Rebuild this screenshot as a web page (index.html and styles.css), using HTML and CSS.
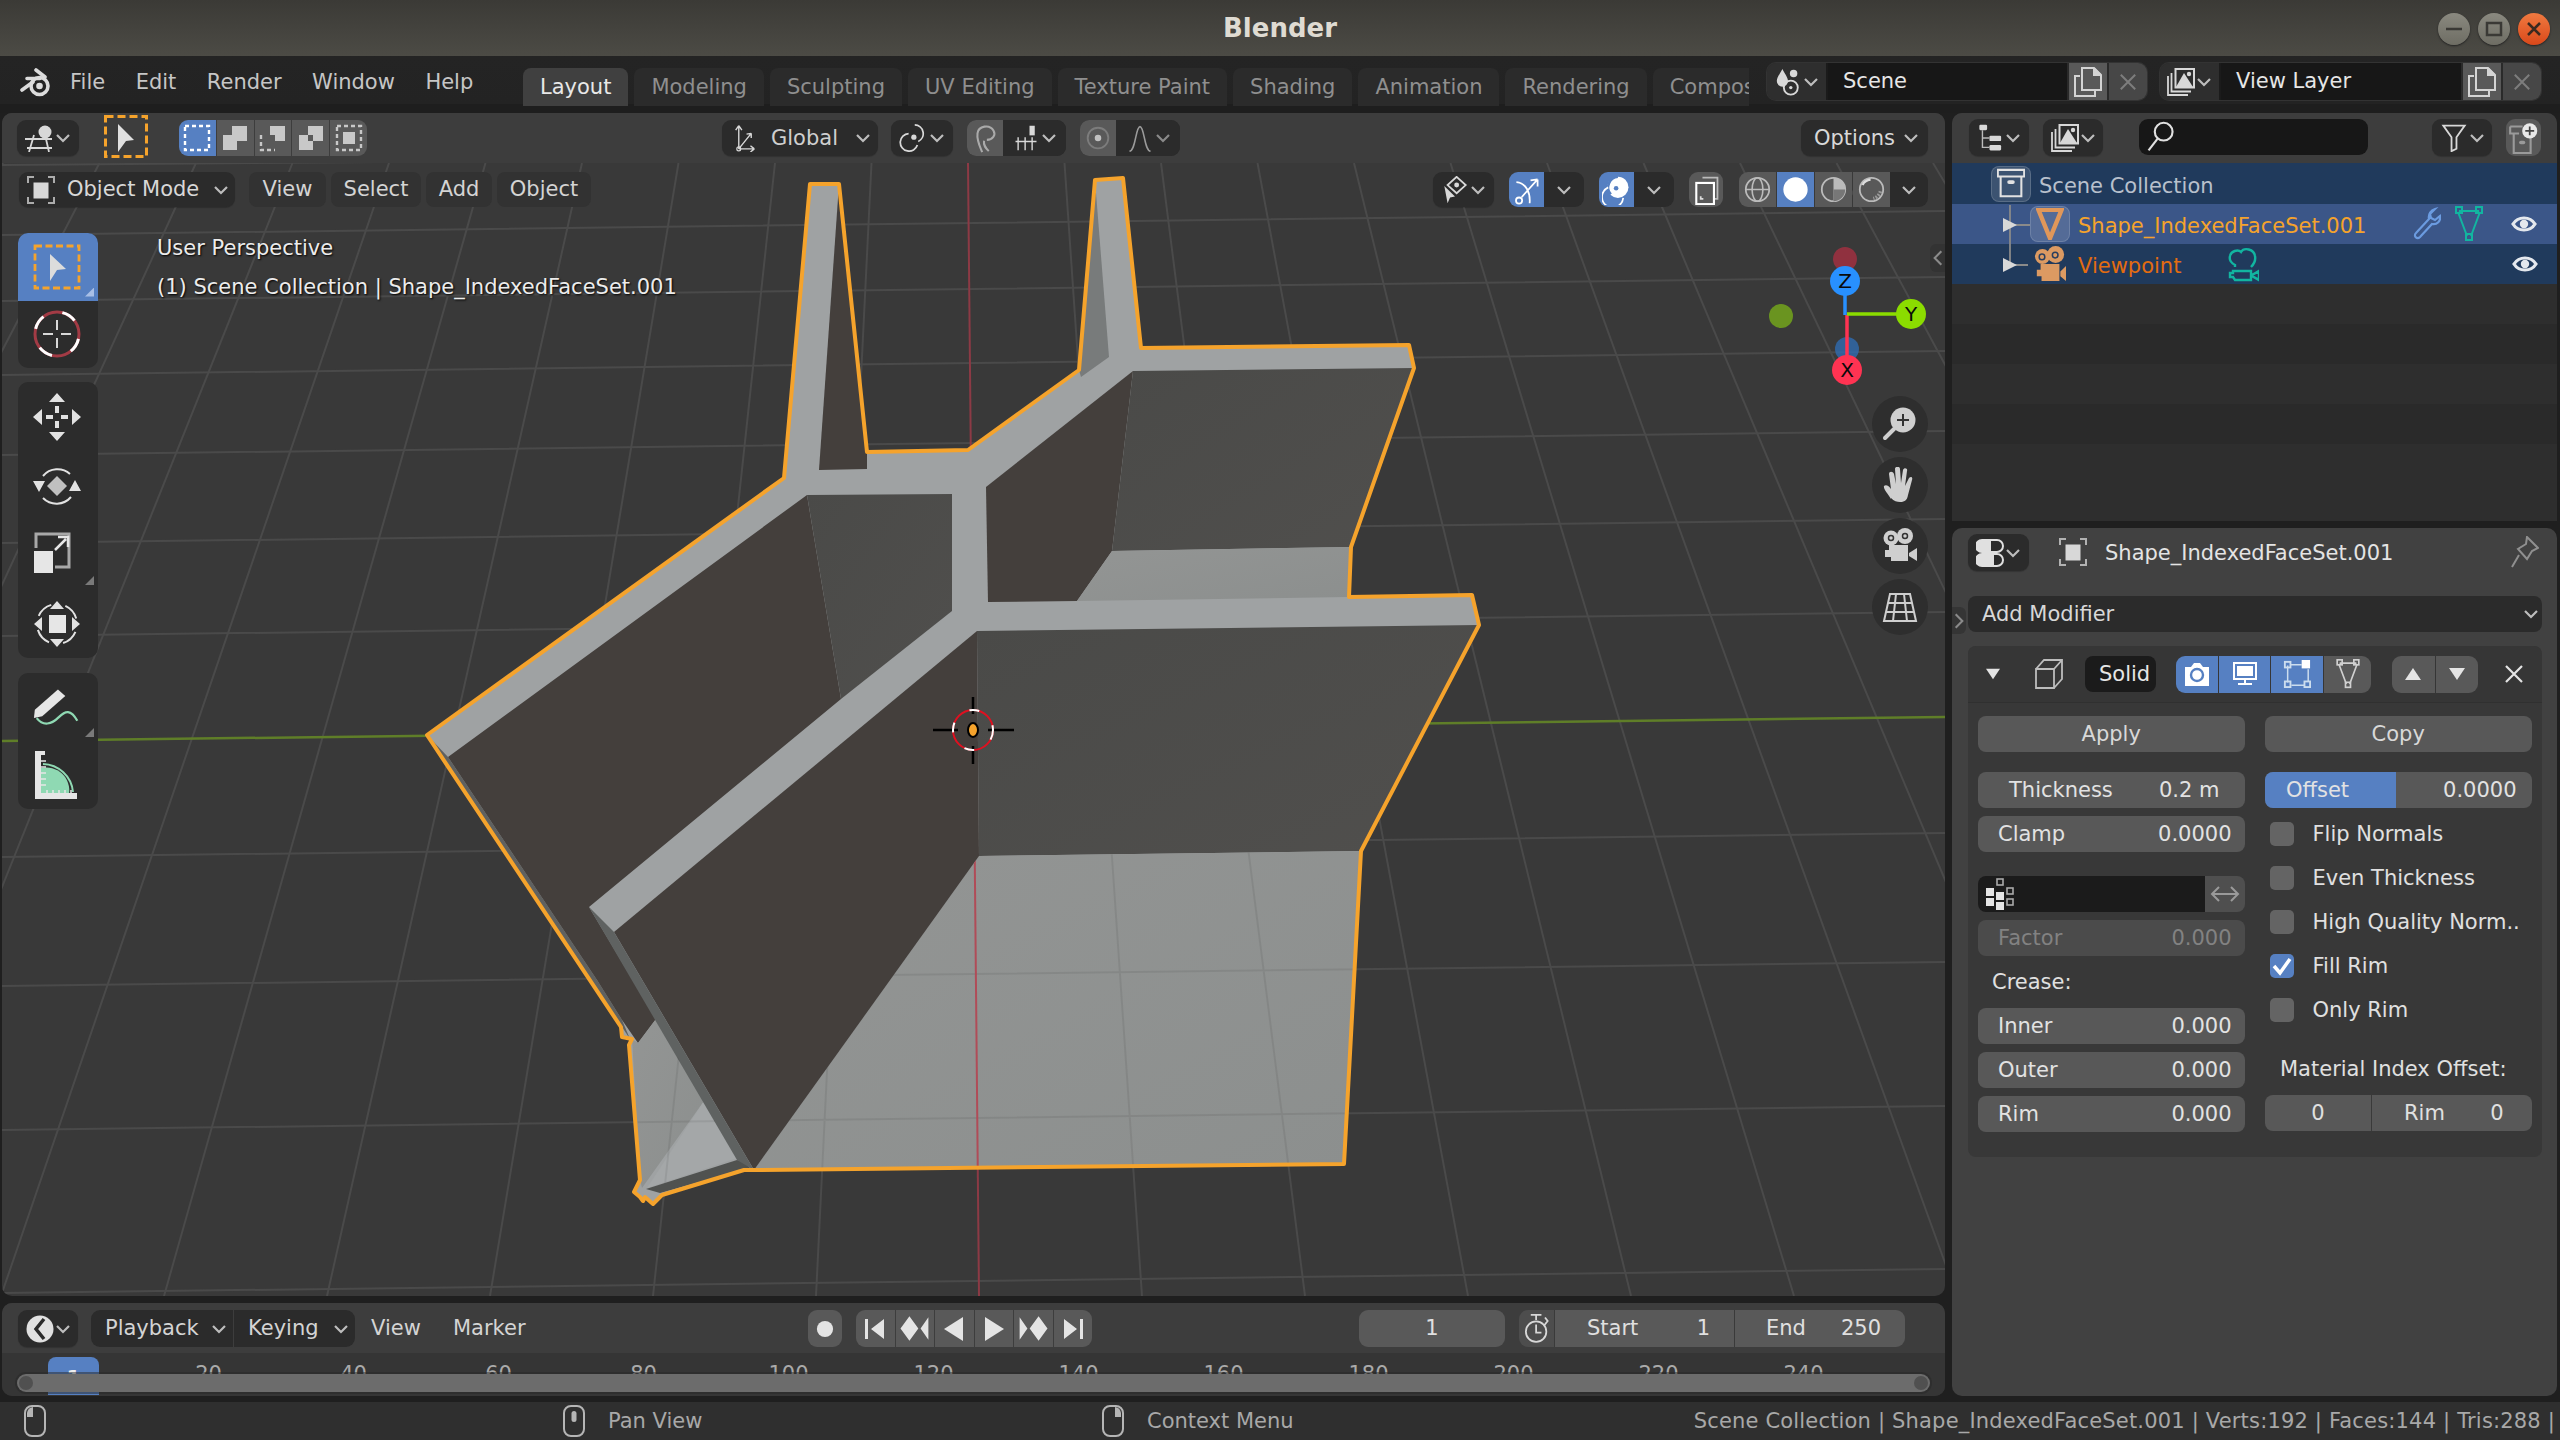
FILE: index.html
```html
<!DOCTYPE html>
<html lang="en">
<head>
<meta charset="utf-8">
<title>Blender</title>
<link rel="stylesheet" href="styles.css">
</head>
<body>
<svg class="sprite" aria-hidden="true"><defs>
<symbol id="chev" viewBox="0 0 16 16"><path d="M2 5l6 6 6-6" fill="none" stroke="currentColor" stroke-width="2.2"/></symbol>
<symbol id="layer" viewBox="0 0 28 28"><path d="M1 8v19h20M4.500 5v18.500h19.500" fill="none" stroke="currentColor" stroke-width="1.800"/><rect x="8.500" y="1" width="18.500" height="18.500" fill="none" stroke="currentColor" stroke-width="2"/><path d="M9 19l8-14 9 14z" fill="currentColor"/><circle cx="22" cy="6" r="2.200" fill="currentColor"/></symbol>
<symbol id="copy" viewBox="0 0 28 30"><path d="M6 9H1v20h20v-5" fill="none" stroke="currentColor" stroke-width="2"/><path d="M8 1h12l7 7v15H8z" fill="none" stroke="currentColor" stroke-width="2"/><path d="M19 1h2l6 6v2h-8z" fill="currentColor"/></symbol>
<symbol id="cross" viewBox="0 0 20 20"><path d="M2 2l16 16M18 2L2 18" fill="none" stroke="currentColor" stroke-width="2.200"/></symbol>
<symbol id="objbox" viewBox="0 0 28 28"><path d="M1 7V1h6M21 1h6v6M27 21v6h-6M7 27H1v-6" fill="none" stroke="currentColor" stroke-width="2" opacity=".75"/><rect x="6.500" y="6.500" width="15" height="16" fill="currentColor"/></symbol>
<symbol id="eye" viewBox="0 0 26 22"><path d="M2 11C7 3 19 3 24 11C19 19 7 19 2 11z" fill="none" stroke="currentColor" stroke-width="3.200"/><circle cx="13" cy="11" r="4.200" fill="currentColor"/></symbol>
<symbol id="cage" viewBox="0 0 28 36"><path d="M4 5h20M3 6l9 24M25 6l-9 24" fill="none" stroke="currentColor" stroke-width="2"/><rect x="1" y="1" width="6" height="6" fill="none" stroke="currentColor" stroke-width="2"/><rect x="21" y="1" width="6" height="6" fill="none" stroke="currentColor" stroke-width="2"/><rect x="11" y="28" width="6" height="6" fill="none" stroke="currentColor" stroke-width="2"/></symbol>
<symbol id="movie" viewBox="0 0 32 36"><path d="M8 21v-2c-4-2-6-5-5-9 1-5 8-7 11-4 3-5 13-3 14 4 1 5-1 8-4 11" fill="none" stroke="currentColor" stroke-width="2.400"/><path d="M6 25h18v9H8l-2-3H3v-4h3zM25 29l7-4v9l-7-4z" fill="none" stroke="currentColor" stroke-width="2.400"/></symbol>
<symbol id="camsolid" viewBox="0 0 34 38"><circle cx="9" cy="11" r="8" fill="currentColor"/><circle cx="23" cy="9" r="9" fill="currentColor"/><circle cx="8.500" cy="11.500" r="3" fill="none" stroke="#2a3f5f" stroke-width="1.600"/><circle cx="22.500" cy="9.500" r="3" fill="none" stroke="#2a3f5f" stroke-width="1.600"/><path d="M7 19h20v18H8v-5H3v-7h4zM28 27l6-6v16l-6-5z" fill="currentColor"/></symbol>
<symbol id="mouse" viewBox="0 0 22 32"><rect x="1" y="1" width="20" height="30" rx="7" fill="none" stroke="currentColor" stroke-width="2"/></symbol>
<symbol id="tri" viewBox="0 0 16 16"><path d="M8 14L0 2h16z" fill="currentColor"/></symbol>
</defs></svg>

<div class="titlebar">
  <span class="title">Blender</span>
  <div class="winbtns">
    <span class="winbtn"><svg viewBox="0 0 32 32"><path d="M8 16h16" stroke="#3a3935" stroke-width="2.500"/></svg></span>
    <span class="winbtn"><svg viewBox="0 0 32 32"><rect x="9" y="10" width="14" height="12" fill="none" stroke="#3a3935" stroke-width="2.500"/></svg></span>
    <span class="winbtn close"><svg viewBox="0 0 32 32"><path d="M10 10l12 12M22 10L10 22" stroke="#3a2a20" stroke-width="2.500"/></svg></span>
  </div>
</div>

<div class="topbar">
  <svg class="logo" viewBox="0 0 32 30"><circle cx="19.500" cy="18" r="8.500" fill="none" stroke="#dcdcdc" stroke-width="3.600"/><circle cx="19.500" cy="18" r="3.300" fill="#dcdcdc"/><path d="M2 22l11-8M7 10.500h13M16 2l9 7" fill="none" stroke="#dcdcdc" stroke-width="3.600" stroke-linecap="round"/></svg>
  <nav class="menu">
    <span class="menu-item">File</span><span class="menu-item">Edit</span><span class="menu-item">Render</span><span class="menu-item">Window</span><span class="menu-item">Help</span>
  </nav>
  <div class="tabs">
    <span class="tab active">Layout</span><span class="tab">Modeling</span><span class="tab">Sculpting</span><span class="tab">UV Editing</span><span class="tab">Texture Paint</span><span class="tab">Shading</span><span class="tab">Animation</span><span class="tab">Rendering</span><span class="tab">Compositing</span>
  </div>
  <div class="idgroup scene-group">
    <span class="iddrop"><svg class="ic28" viewBox="0 0 28 30"><path d="M8 1c3 6 6 9 6 13a6 6 0 0 1-12 0c0-4 3-7 6-13z" fill="#d8d8d8"/><circle cx="20" cy="6" r="4" fill="#d8d8d8"/><circle cx="17" cy="21" r="7.500" fill="none" stroke="#d8d8d8" stroke-width="2"/><circle cx="17" cy="21" r="1.800" fill="#d8d8d8"/></svg><svg class="chev"><use href="#chev"/></svg></span>
    <span class="idinput scene-input">Scene</span>
    <span class="idbtn"><svg class="ic-copy"><use href="#copy"/></svg></span>
    <span class="idbtn dim"><svg class="ic-x"><use href="#cross"/></svg></span>
  </div>
  <div class="idgroup layer-group">
    <span class="iddrop"><svg class="ic28"><use href="#layer"/></svg><svg class="chev"><use href="#chev"/></svg></span>
    <span class="idinput layer-input">View Layer</span>
    <span class="idbtn"><svg class="ic-copy"><use href="#copy"/></svg></span>
    <span class="idbtn dim"><svg class="ic-x"><use href="#cross"/></svg></span>
  </div>
</div>

<main class="workspace">
  <div class="leftcol">
    <section class="viewport">
      <svg class="scene" viewBox="2 113 1943 1183" preserveAspectRatio="none">
        <defs>
          <clipPath id="floorclip"><path d="M979 856L1361 851 1344 1164 754 1170zM632 1039L656 1019 737 1160 642 1190z"/></clipPath>
          <linearGradient id="wallr" x1="0" y1="0" x2="1" y2="1"><stop offset="0" stop-color="#4a4a48"/><stop offset="1" stop-color="#504f4d"/></linearGradient>
          <linearGradient id="floorg" x1="0" y1="0" x2="1" y2="1"><stop offset="0" stop-color="#939594"/><stop offset="1" stop-color="#8c8f8e"/></linearGradient>
        </defs>
        <g class="grid">
          <path d="M2 165L1945 150M2 235L1945 211M2 301L1945 277M2 375L1945 351M2 455L1945 431M2 543L1945 519M2 636L1945 612M2 857L1945 833M2 986L1945 962M2 1130L1945 1106M2 1293L1945 1269"/>
          <path d="M3 163L-651 1296M99.500 163L-488 1296M196 163L-325 1296M292.500 163L-162 1296M389 163L1 1296M485.500 163L164 1296M582 163L327 1296M678.500 163L490 1296M775 163L653 1296M871.500 163L816 1296M1064.500 163L1142 1296M1161 163L1305 1296M1257.500 163L1468 1296M1354 163L1631 1296M1450.500 163L1794 1296M1547 163L1957 1296M1643.500 163L2120 1296M1740 163L2283 1296M1836.500 163L2446 1296M1933 163L2609 1296"/>
        </g>
        <path class="axis-y" d="M2 741L1945 717"/>
        <path class="axis-x" d="M968 163L979 1296"/>
        <path class="top" d="M427 735L784 478 810 184 839 184 867 452 968 450 1079 370 1095 180 1123 178 1141 348 1409 345 1414 368 1351 547 1349 597 1472 595 1479 625 1361 851 1344 1164 754 1170 744 1170 662 1195 653 1204 645 1197 643 1201 640 1197 634 1192 640 1180 629 1045 632 1039 622 1037 621 1027z"/>
        <path class="dark" d="M839 184L867 452 867 469 819 470z"/>
        <path class="spike" d="M1095 180L1109 357 1081 377 1079 370z"/>
        <path class="sliver" d="M428 736L448 757 597 980 622 1020 630 1039 622 1027z"/>
        <path class="dark" d="M448 757L807 495 841 699 589 907 656 1019 638 1043 622 1020 597 980z"/>
        <path class="wall" d="M807 495L952 494 952 611 841 699z"/>
        <path class="dark" d="M986 487L1133 371 1112 551 1077 601 988 602z"/>
        <path class="wall" d="M1133 371L1414 368 1351 547 1112 551z"/>
        <path class="floor" d="M1112 551L1351 547 1349 597 1077 601z"/>
        <path class="wall" d="M977 631L1479 625 1361 851 979 856z"/>
        <path class="floor" d="M979 856L1361 851 1344 1164 754 1170z"/>
        <path class="dark" d="M977 631L979 856 754 1170 614 932z"/>
        <path class="floor" d="M632 1039L638 1043 656 1019 704 1101 642 1188 640 1180z"/>
        <path class="top-lite" d="M704 1101L737 1158 647 1188z"/>
        <path class="band" d="M737 1160L745 1162 750 1168 660 1193 646 1189z"/>
        <path class="band2" d="M589 907L614 932 754 1170 737 1160z"/>
        <g clip-path="url(#floorclip)"><path class="floorgrid" d="M2 986L1945 962M2 1130L1945 1106M1064.500 163L1142 1296M1161 163L1305 1296M1257.500 163L1468 1296M775 163L653 1296M871.500 163L816 1296M582 163L327 1296"/><path class="axis-x2" d="M968 163L979 1296"/></g>
        <path class="outline" d="M427 735L784 478 810 184 839 184 867 452 968 450 1079 370 1095 180 1123 178 1141 348 1409 345 1414 368 1351 547 1349 597 1472 595 1479 625 1361 851 1344 1164 754 1170 744 1170 662 1195 653 1204 645 1197 643 1201 640 1197 634 1192 640 1180 629 1045 632 1039 622 1037 621 1027z"/>
        <g class="cursor3d">
          <path class="chair" d="M933 730H958M988 730H1014M973 697V714M973 746V764"/>
          <ellipse class="ring-r" cx="973" cy="730" rx="20" ry="20"/>
          <ellipse class="ring-w" cx="973" cy="730" rx="20" ry="20"/>
          <ellipse class="dot" cx="973" cy="730" rx="5" ry="7"/>
        </g>
      </svg>

      <div class="vhead">
        <span class="dd dd-editor"><svg class="ic28" viewBox="0 0 28 28"><circle cx="20" cy="8" r="6.500" fill="#d8d8d8"/><path d="M0 15h27M2 24h25M9 11L4 28M21 15l3 13" fill="none" stroke="#d8d8d8" stroke-width="1.800"/></svg><svg class="chev"><use href="#chev"/></svg></span>
        <span class="activetool"><svg viewBox="0 0 44 43"><rect x="1.500" y="1.500" width="41" height="40" fill="none" stroke="#f5a32c" stroke-width="3" stroke-dasharray="8 4"/><path d="M14 9l16 16-8 1-8 11z" fill="#e0e0e0"/></svg></span>
        <span class="seg selmodes">
          <span class="segb on"><svg viewBox="0 0 30 30"><rect x="3" y="3" width="24" height="24" fill="none" stroke="#fff" stroke-width="2.400" stroke-dasharray="4 3"/></svg></span>
          <span class="segb"><svg viewBox="0 0 30 30"><path d="M3 12h9V3h15v15H17v9H3z" fill="#c8c8c8"/></svg></span>
          <span class="segb"><svg viewBox="0 0 30 30"><path d="M12 3h15v15H17v-6h-5z" fill="#c8c8c8"/><path d="M3 12v15h14" fill="none" stroke="#c8c8c8" stroke-width="2.400" stroke-dasharray="4 3"/></svg></span>
          <span class="segb"><svg viewBox="0 0 30 30"><path fill-rule="evenodd" d="M3 12h9V3h15v15H17v9H3zM12 12v6h5v-6z" fill="#c8c8c8"/></svg></span>
          <span class="segb"><svg viewBox="0 0 30 30"><rect x="3" y="3" width="24" height="24" fill="none" stroke="#c8c8c8" stroke-width="2.400" stroke-dasharray="4 3"/><rect x="9" y="9" width="12" height="12" fill="#c8c8c8"/></svg></span>
        </span>
        <span class="dd dd-global"><svg class="ic28" viewBox="0 0 28 36"><path d="M6 32V2M6 2L2 8M6 2l4 6M6 32h20M26 32l-5-4M26 32l-5 4M6 32L22 12M22 12l-6 1M22 12v6" fill="none" stroke="#d8d8d8" stroke-width="1.800"/><circle cx="6" cy="32" r="2.500" fill="none" stroke="#d8d8d8" stroke-width="1.500"/></svg><span class="dd-txt">Global</span><svg class="chev"><use href="#chev"/></svg></span>
        <span class="dd dd-pivot"><svg class="ic28" viewBox="0 0 28 32"><path d="M16 1a10 10 0 0 1 4 19M9 11A10 10 0 1 0 19 24" fill="none" stroke="#d8d8d8" stroke-width="2"/><circle cx="15" cy="15" r="3" fill="#d8d8d8"/></svg><svg class="chev"><use href="#chev"/></svg></span>
        <span class="seg snap"><span class="segb toggle"><svg viewBox="0 0 30 32"><path d="M12 31C9 24 6 18 7 11 8 3 20 1 24 8c3 5-1 10-7 10M19 30c-3-3-6-6-5-11" fill="none" stroke="#aaa" stroke-width="2.200"/></svg></span><span class="segdrop"><svg class="ic28" viewBox="0 0 28 32"><rect x="18" y="2" width="6" height="11" fill="#d8d8d8"/><path d="M2 20h24M5 15v15M13 15v15M21 15v15" fill="none" stroke="#d8d8d8" stroke-width="1.600"/></svg><svg class="chev"><use href="#chev"/></svg></span></span>
        <span class="seg prop"><span class="segb toggle"><svg viewBox="0 0 30 32"><circle cx="15" cy="16" r="11" fill="none" stroke="#7c7c7c" stroke-width="2"/><circle cx="15" cy="16" r="3.500" fill="#c0c0c0"/></svg></span><span class="segdrop"><svg class="ic28" viewBox="0 0 28 32"><path d="M2 31c7 0 7-28 12-28s5 28 12 28" fill="none" stroke="#9a9a9a" stroke-width="1.800"/></svg><svg class="chev dimc"><use href="#chev"/></svg></span></span>
        <span class="dd dd-options"><span class="dd-txt">Options</span><svg class="chev"><use href="#chev"/></svg></span>
      </div>

      <div class="vhead2">
        <span class="dd dd-mode"><svg class="ic28"><use href="#objbox"/></svg><span class="dd-txt">Object Mode</span><svg class="chev"><use href="#chev"/></svg></span>
        <span class="vmenu vm-view">View</span><span class="vmenu vm-select">Select</span><span class="vmenu vm-add">Add</span><span class="vmenu vm-object">Object</span>
        <span class="dd dd-vis"><svg class="ic28" viewBox="0 0 28 34"><path d="M16 1l11 10-11 10L5 11z" fill="none" stroke="#d8d8d8" stroke-width="2.200"/><circle cx="16" cy="11" r="3" fill="#d8d8d8"/><path d="M1 12l13 13-6 1-3 7z" fill="#d8d8d8"/></svg><svg class="chev"><use href="#chev"/></svg></span>
        <span class="seg gizmo"><span class="segb on"><svg viewBox="0 0 30 34"><path d="M3 8C14 9 19 20 18 32M9 25L27 5M27 5l-8 1M27 5v8" fill="none" stroke="#fff" stroke-width="2"/><circle cx="6" cy="29" r="3.500" fill="none" stroke="#fff" stroke-width="2"/></svg></span><span class="segdrop"><svg class="chev"><use href="#chev"/></svg></span></span>
        <span class="seg overlay"><span class="segb on"><svg viewBox="0 0 30 34"><circle cx="16" cy="14" r="12" fill="#fff"/><path d="M16 2a12 12 0 0 0-8 20" fill="none" stroke="#5680c2" stroke-width="3"/><circle cx="14" cy="15" r="2.600" fill="#5680c2"/><path d="M22 26A12 12 0 1 1 5 14" fill="none" stroke="#fff" stroke-width="2"/></svg></span><span class="segdrop"><svg class="chev"><use href="#chev"/></svg></span></span>
        <span class="seg xray"><span class="segb plain"><svg viewBox="0 0 30 34"><path d="M11 3h17v24h-4" fill="none" stroke="#bbb" stroke-width="2"/><rect x="4" y="9" width="20" height="24" fill="none" stroke="#fff" stroke-width="2.400"/><path d="M9 24v3h3" fill="none" stroke="#ddd" stroke-width="2"/></svg></span></span>
        <span class="seg shading">
          <span class="segb plain"><svg viewBox="0 0 30 30"><circle cx="15" cy="15" r="13" fill="none" stroke="#bbb" stroke-width="2"/><ellipse cx="15" cy="15" rx="6" ry="13" fill="none" stroke="#bbb" stroke-width="1.800"/><path d="M2 15h26" stroke="#bbb" stroke-width="1.800"/></svg></span>
          <span class="segb on"><svg viewBox="0 0 30 30"><circle cx="15" cy="15" r="13.500" fill="#fff"/></svg></span>
          <span class="segb plain"><svg viewBox="0 0 30 30"><circle cx="15" cy="15" r="13" fill="none" stroke="#bbb" stroke-width="2"/><path d="M15 2a13 13 0 0 1 0 26z" fill="#bbb"/><path d="M15 15h13a13 13 0 0 1-13 13z" fill="#777"/></svg></span>
          <span class="segb plain"><svg viewBox="0 0 30 30"><circle cx="15" cy="15" r="13" fill="none" stroke="#bbb" stroke-width="2"/><path d="M5 10a11 11 0 0 1 9-6" fill="none" stroke="#ddd" stroke-width="2.500"/><path d="M25 17a11 11 0 0 1-8 8" fill="none" stroke="#999" stroke-width="4" stroke-dasharray="2 1.500"/></svg></span>
          <span class="segdrop"><svg class="chev"><use href="#chev"/></svg></span>
        </span>
      </div>

      <div class="vinfo">
        <p>User Perspective</p>
        <p>(1) Scene Collection | Shape_IndexedFaceSet.001</p>
      </div>

      <div class="tools">
        <div class="toolgroup g1">
          <span class="tool on"><svg viewBox="0 0 48 48"><rect x="2" y="3" width="44" height="42" fill="none" stroke="#f5a32c" stroke-width="2.800" stroke-dasharray="7 3.500"/><path d="M17 11l16 15-9 1-7 11z" fill="#dcdcdc"/></svg><i class="corner"></i></span>
          <span class="tool"><svg viewBox="0 0 48 48"><circle cx="24" cy="24" r="22" fill="none" stroke="#a33b45" stroke-width="3"/><circle cx="24" cy="24" r="22" fill="none" stroke="#fff" stroke-width="3" stroke-dasharray="14.500 20" stroke-dashoffset="-5"/><path d="M24 10v10M24 28v10M10 24h10M28 24h10" stroke="#d8d8d8" stroke-width="2"/></svg></span>
        </div>
        <div class="toolgroup g2">
          <span class="tool"><svg viewBox="0 0 48 48"><path d="M24 0l8 9H16zM24 48l-8-9h16zM0 24l9-8v16zM48 24l-9 8V16z" fill="#e2e2e2"/><path d="M22 13h4v7h-4zM22 28h4v7h-4zM13 22h7v4h-7zM28 22h7v4h-7z" fill="#e2e2e2"/></svg></span>
          <span class="tool"><svg viewBox="0 0 48 48"><path d="M10 14A19 19 0 0 1 37 12M38 35A19 19 0 0 1 10 36" fill="none" stroke="#e2e2e2" stroke-width="2"/><path d="M24 14l10 10-10 10-10-10z" fill="#c0c0c0"/><path d="M0 19h12L6 30zM36 29h12l-6-11z" fill="#e2e2e2"/></svg></span>
          <span class="tool"><svg viewBox="0 0 48 48"><path d="M3 17V3h33v33H22" fill="none" stroke="#a8a8a8" stroke-width="3"/><rect x="1" y="20" width="19" height="22" fill="#e6e6e6"/><path d="M22 19L33 8M25 6h10v10" fill="none" stroke="#e6e6e6" stroke-width="2.500"/></svg><i class="corner"></i></span>
          <span class="tool"><svg viewBox="0 0 48 48"><rect x="16" y="15" width="17" height="18" fill="#e6e6e6"/><path d="M24 1l7 8H17zM24 47l-7-8h14zM1 24l8-7v14zM47 24l-8 7V17z" fill="#e2e2e2"/><circle cx="24" cy="24" r="20" fill="none" stroke="#e2e2e2" stroke-width="2" stroke-dasharray="17 14.400" stroke-dashoffset="-8"/></svg></span>
        </div>
        <div class="toolgroup g3">
          <span class="tool"><svg viewBox="0 0 52 48"><path d="M2 27L27 5l8 7L10 34 1 36z" fill="#e6e6e6"/><path d="M4 36c7 9 16 7 24-1 7-7 13-9 20 4" fill="none" stroke="#8fd9b3" stroke-width="2.400"/></svg><i class="corner"></i></span>
          <span class="tool"><svg viewBox="0 0 48 48"><path d="M8 17a23 23 0 0 1 28 26H8z" fill="#8fd9b3"/><path d="M10 13a31 31 0 0 1 30 28" fill="none" stroke="#8fd9b3" stroke-width="2"/><path d="M2 0h10v4H8v38h36v6H2z" fill="#e6e6e6"/><path d="M8 10h5M8 16h5M8 22h5M8 28h5M8 34h5M14 42v-3M20 42v-3M26 42v-3M32 42v-3M38 42v-3" stroke="#e6e6e6" stroke-width="1.500"/></svg></span>
        </div>
      </div>

      <svg class="gizmo3d" viewBox="0 0 130 130">
        <circle cx="56" cy="27" r="12" fill="#9a3140" opacity=".9"/>
        <circle cx="58" cy="117" r="12" fill="#2f6cb0" opacity=".8"/>
        <circle cx="-8" cy="84" r="12" fill="#6a9420"/>
        <path d="M56 49V83" stroke="#2890ff" stroke-width="3.500"/>
        <path d="M58 83V125" stroke="#ff3352" stroke-width="3.500"/>
        <path d="M58 82H108" stroke="#8bdc00" stroke-width="3.500"/>
        <circle cx="56" cy="49" r="15" fill="#2890ff"/>
        <circle cx="122" cy="82" r="15" fill="#8bdc00"/>
        <circle cx="58" cy="138" r="15" fill="#ff3352"/>
        <text x="56" y="56" class="gz">Z</text>
        <text x="122" y="89" class="gz">Y</text>
        <text x="58" y="145" class="gz">X</text>
      </svg>

      <div class="navbtns">
        <span class="navbtn"><svg viewBox="0 0 36 36"><circle cx="21" cy="14" r="12.500" fill="#cfcfcf"/><path d="M21 8v12M15 14h12" stroke="#333" stroke-width="2"/><path d="M12 23L3 32" stroke="#cfcfcf" stroke-width="4" stroke-linecap="round"/></svg></span>
        <span class="navbtn"><svg viewBox="0 0 36 36"><path d="M9 32C6 27 1 22 2 19c2-2 5 0 7 3L7 7c0-3 4-3 5 0l2 10-1-15c0-3 5-3 5 0l1 14 2-13c1-3 5-2 4 1l-2 15 4-8c2-2 4-1 3 2l-4 15c-1 6-4 7-8 7-3 0-6-1-9-4z" fill="#cfcfcf"/></svg></span>
        <span class="navbtn"><svg viewBox="0 0 36 36"><circle cx="9" cy="10" r="7.500" fill="#cfcfcf"/><circle cx="23" cy="8" r="8" fill="#cfcfcf"/><circle cx="9" cy="10" r="2.500" fill="none" stroke="#333" stroke-width="1.500"/><circle cx="23" cy="8" r="2.500" fill="none" stroke="#333" stroke-width="1.500"/><path d="M7 17h19v16H9v-4H3v-7h4zM27 25l8-5v13l-8-5z" fill="#cfcfcf"/></svg></span>
        <span class="navbtn"><svg viewBox="0 0 36 36"><path d="M8 5h20l6 27H2zM6 14h24M4 23h28M14 5l-3 27M22 5l3 27" fill="none" stroke="#cfcfcf" stroke-width="2"/></svg></span>
      </div>
      <span class="sidearrow"><svg viewBox="0 0 12 20"><path d="M10 2L2 10l8 8" fill="none" stroke="#8a8a8a" stroke-width="2.500"/></svg></span>
    </section>

    <section class="timeline">
      <div class="thead">
        <span class="dd dd-time"><svg class="ic28" viewBox="0 0 28 28"><circle cx="14" cy="14" r="13.500" fill="#e0e0e0"/><path d="M18 4l-8 10 8 10" fill="none" stroke="#2a2a2a" stroke-width="3.500"/></svg><svg class="chev"><use href="#chev"/></svg></span>
        <span class="ddgroup">
          <span class="ddpart dp-play"><span class="dd-txt">Playback</span><svg class="chev"><use href="#chev"/></svg></span>
          <span class="ddpart dp-key"><span class="dd-txt">Keying</span><svg class="chev"><use href="#chev"/></svg></span>
        </span>
        <span class="tmenu tm-view">View</span><span class="tmenu tm-marker">Marker</span>
        <span class="btn record"><svg viewBox="0 0 20 20"><circle cx="10" cy="10" r="9" fill="#e4e4e4"/></svg></span>
        <span class="seg transport">
          <span class="tbtn"><svg viewBox="0 0 26 26"><path d="M3 3h3v20H3zM22 3v20L9 13z" fill="#e4e4e4"/></svg></span>
          <span class="tbtn"><svg class="wide" viewBox="0 0 30 26"><path d="M10 2l8 11-8 11-8-11zM27 3v20l-7-10z" fill="#e4e4e4"/></svg></span>
          <span class="tbtn"><svg viewBox="0 0 26 26"><path d="M22 1v24L3 13z" fill="#e4e4e4"/></svg></span>
          <span class="tbtn"><svg viewBox="0 0 26 26"><path d="M4 1v24l19-12z" fill="#e4e4e4"/></svg></span>
          <span class="tbtn"><svg class="wide" viewBox="0 0 30 26"><path d="M20 2l-8 11 8 11 8-11zM3 3v20l7-10z" fill="#e4e4e4"/></svg></span>
          <span class="tbtn"><svg viewBox="0 0 26 26"><path d="M23 3h-3v20h3zM4 3v20l13-10z" fill="#e4e4e4"/></svg></span>
        </span>
        <span class="btn frame">1</span>
        <span class="seg range">
          <span class="rng-icon"><svg viewBox="0 0 28 36"><circle cx="13" cy="21" r="11.500" fill="none" stroke="#d8d8d8" stroke-width="2"/><path d="M13 13v9h6M7 2h12M13 2v6M23 5l3 4-4 5" fill="none" stroke="#d8d8d8" stroke-width="2"/></svg></span>
          <span class="rng rng-start"><span>Start</span><span>1</span></span>
          <span class="rng rng-end"><span>End</span><span>250</span></span>
        </span>
      </div>
      <div class="scrub">
        <div class="ticks"><span>20</span><span>40</span><span>60</span><span>80</span><span>100</span><span>120</span><span>140</span><span>160</span><span>180</span><span>200</span><span>220</span><span>240</span></div>
        <span class="frametag">1</span>
        <div class="scrollbar"><i></i><i></i></div>
      </div>
    </section>
  </div>

  <div class="rightcol">
    <section class="outliner">
      <div class="ohead">
        <span class="dd dd-o1"><svg class="ic28" viewBox="0 0 30 36"><rect x="0" y="1" width="10" height="7" rx="1.500" fill="#d8d8d8"/><rect x="13" y="15" width="15" height="7" rx="1.500" fill="#d8d8d8"/><rect x="13" y="27" width="15" height="7" rx="1.500" fill="#d8d8d8"/><path d="M4 8v22h9M4 18h9" fill="none" stroke="#bbb" stroke-width="1.800"/></svg><svg class="chev"><use href="#chev"/></svg></span>
        <span class="dd dd-o2"><svg class="ic28"><use href="#layer"/></svg><svg class="chev"><use href="#chev"/></svg></span>
        <span class="search"><svg viewBox="0 0 30 36"><circle cx="18" cy="12" r="10" fill="none" stroke="#e0e0e0" stroke-width="2.400"/><path d="M11 20L1 33" stroke="#e0e0e0" stroke-width="2.400"/></svg></span>
        <span class="dd dd-o3"><svg class="ic28" viewBox="0 0 30 34"><path d="M2 2h26L18 16v14l-6 3V16z" fill="none" stroke="#d8d8d8" stroke-width="2.200"/></svg><svg class="chev"><use href="#chev"/></svg></span>
        <span class="onew"><svg viewBox="0 0 32 36"><path d="M1 5h14M1 5v8h10M5 13v22h19V16" fill="none" stroke="#9a9a9a" stroke-width="2.400"/><rect x="11" y="21" width="7" height="4" rx="2" fill="#9a9a9a"/><circle cx="23" cy="10" r="8.500" fill="#e8e8e8"/><path d="M23 5v10M18 10h10" stroke="#444" stroke-width="2"/></svg></span>
      </div>
      <div class="orows">
        <div class="orow sel r1"><span class="obox"><svg viewBox="0 0 28 34"><path d="M0 2h28v7H0zM3 9v21h22V9" fill="none" stroke="#e2e2e2" stroke-width="2.200"/><rect x="10" y="13" width="8" height="4" rx="2" fill="#e2e2e2"/></svg></span><span class="olabel">Scene Collection</span></div>
        <div class="orow active r2"><span class="obox"><svg viewBox="0 0 30 36"><path d="M2 2h26L15 34z" fill="none" stroke="#e0975a" stroke-width="5"/></svg></span><span class="olabel objname">Shape_IndexedFaceSet.001</span><svg class="ic-wrench" viewBox="0 0 28 34"><path d="M22 2l-5 5 1 4 4 2 5-4c1 5-3 9-8 8L7 30c-3 3-7-1-4-4L16 12c-1-5 2-9 6-10z" fill="none" stroke="#6b9be0" stroke-width="2.200"/></svg><svg class="ic-cage"><use href="#cage"/></svg><svg class="ic-eye"><use href="#eye"/></svg></div>
        <div class="orow sel r3"><span class="obox plainbox"><svg class="ic-cam"><use href="#camsolid"/></svg></span><span class="olabel objname2">Viewpoint</span><svg class="ic-movie"><use href="#movie"/></svg><svg class="ic-eye"><use href="#eye"/></svg></div>
        <div class="orow alt"></div><div class="orow"></div><div class="orow alt"></div><div class="orow"></div><div class="orow alt"></div>
      </div>
      <svg class="otree" viewBox="0 0 40 80"><path d="M10 4v60M10 24h20M10 64h18" fill="none" stroke="#8a8a8a" stroke-width="1.800"/><path d="M3 17l14 7-14 7zM3 57l14 7-14 7z" fill="#d8d8d8"/></svg>
    </section>

    <section class="props">
      <div class="phead">
        <span class="dd dd-p"><svg class="ic28" viewBox="0 0 28 28"><rect x="0" y="1" width="27" height="12" rx="6" fill="none" stroke="#e0e0e0" stroke-width="2"/><path d="M6 1h9v12H6a6 6 0 0 1 0-12zM6 15h12v12H6a6 6 0 0 1 0-12z" fill="#e0e0e0"/><rect x="0" y="15" width="27" height="12" rx="6" fill="none" stroke="#e0e0e0" stroke-width="2"/></svg><svg class="chev"><use href="#chev"/></svg></span>
        <svg class="ic28 pobj"><use href="#objbox"/></svg>
        <span class="pname">Shape_IndexedFaceSet.001</span>
        <svg class="pin" viewBox="0 0 28 32"><path d="M16 1l11 11-6 3-5 8-9-10 8-5zM8 19L1 31" fill="none" stroke="#8f8f8f" stroke-width="2"/></svg>
      </div>
      <div class="addmod"><span>Add Modifier</span><svg class="chev"><use href="#chev"/></svg></div>
      <div class="modpanel">
        <div class="modhead">
          <svg class="ic-tri"><use href="#tri"/></svg>
          <svg class="ic-cube" viewBox="0 0 28 32"><path d="M1 11h18v19H1zM1 11l8-9h18v19l-8 9M19 11l8-9" fill="none" stroke="#bdbdbd" stroke-width="1.800"/></svg>
          <span class="modname">Solid</span>
          <span class="seg modes">
            <span class="segb on m1"><svg viewBox="0 0 28 28"><path d="M2 7h6l3-4h6l3 4h6v19H2z" fill="#fff"/><circle cx="14" cy="15" r="6" fill="none" stroke="#5680c2" stroke-width="2.400"/></svg></span>
            <span class="segb on m2"><svg viewBox="0 0 28 28"><rect x="3" y="3" width="22" height="16" fill="none" stroke="#fff" stroke-width="2"/><rect x="6" y="6" width="16" height="10" fill="#fff"/><path d="M14 19v4M7 24h14" stroke="#fff" stroke-width="2"/></svg></span>
            <span class="segb on m3"><svg viewBox="0 0 30 30"><path d="M5 6v18M9 27h14M8 5h12M27 10v13" stroke="#cde" stroke-width="1.600" fill="none"/><rect x="2" y="2" width="6" height="6" fill="none" stroke="#cde" stroke-width="2"/><rect x="2" y="23" width="6" height="6" fill="none" stroke="#cde" stroke-width="2"/><rect x="23" y="23" width="6" height="6" fill="none" stroke="#cde" stroke-width="2"/><rect x="20" y="0" width="9" height="9" fill="#fff"/></svg></span>
            <span class="segb plain m4"><svg class="ic-cage2"><use href="#cage"/></svg></span>
          </span>
          <span class="seg updown">
            <span class="segb plain"><svg class="ic-tri up"><use href="#tri"/></svg></span>
            <span class="segb plain"><svg class="ic-tri"><use href="#tri"/></svg></span>
          </span>
          <svg class="ic-close"><use href="#cross"/></svg>
        </div>
        <div class="modbody">
          <div class="modcol">
            <span class="field center gap-b20">Apply</span>
            <span class="field thick"><span>Thickness</span><span>0.2 m</span></span>
            <span class="field"><span>Clamp</span><span>0.0000</span></span>
            <span class="vgroup"><span class="vginput"><svg viewBox="0 0 28 32"><rect x="0" y="10" width="8" height="8" fill="#e4e4e4"/><rect x="0" y="20" width="8" height="8" fill="#e4e4e4"/><rect x="10" y="14" width="8" height="8" fill="#e4e4e4"/><rect x="10" y="24" width="8" height="8" fill="#e4e4e4"/><rect x="11" y="1" width="6" height="6" fill="none" stroke="#aaa" stroke-width="1.600"/><rect x="21" y="10" width="6" height="6" fill="none" stroke="#aaa" stroke-width="1.600"/><rect x="21" y="21" width="6" height="6" fill="none" stroke="#aaa" stroke-width="1.600"/></svg></span><span class="vgbtn"><svg viewBox="0 0 30 20"><path d="M2 10h26M9 3l-7 7 7 7M21 3l7 7-7 7" fill="none" stroke="#9a9a9a" stroke-width="2"/></svg></span></span>
            <span class="field disabled"><span>Factor</span><span>0.000</span></span>
            <span class="plainlabel crease">Crease:</span>
            <span class="field"><span>Inner</span><span>0.000</span></span>
            <span class="field"><span>Outer</span><span>0.000</span></span>
            <span class="field"><span>Rim</span><span>0.000</span></span>
          </div>
          <div class="modcol">
            <span class="field center gap-b20">Copy</span>
            <span class="field offset"><span class="off-fill"></span><span class="off-l">Offset</span><span class="off-v">0.0000</span></span>
            <label class="check first"><i></i>Flip Normals</label>
            <label class="check"><i></i>Even Thickness</label>
            <label class="check"><i></i>High Quality Norm..</label>
            <label class="check checked"><i><svg viewBox="0 0 24 24"><path d="M4 12l6 7 10-14" fill="none" stroke="#fff" stroke-width="3.500"/></svg></i>Fill Rim</label>
            <label class="check"><i></i>Only Rim</label>
            <span class="plainlabel matlabel">Material Index Offset:</span>
            <span class="matrow"><span class="mat1">0</span><span class="mat2"><span>Rim</span><span>0</span></span></span>
          </div>
        </div>
      </div>
      <span class="propsarrow"><svg viewBox="0 0 12 20"><path d="M2 2l8 8-8 8" fill="none" stroke="#8a8a8a" stroke-width="2.500"/></svg></span>
    </section>
  </div>
</main>

<footer class="status">
  <span class="st-item"><svg class="ic-mouse" viewBox="0 0 22 32"><use href="#mouse"/><path d="M3 8a7 7 0 0 1 6-6v10H3z" fill="#b5b5b5"/></svg></span>
  <span class="st-item"><svg class="ic-mouse" viewBox="0 0 22 32"><use href="#mouse"/><rect x="8.500" y="6" width="5" height="11" rx="2.500" fill="#b5b5b5"/></svg><span>Pan View</span></span>
  <span class="st-item"><svg class="ic-mouse" viewBox="0 0 22 32"><use href="#mouse"/><path d="M19 8a7 7 0 0 0-6-6v10h6z" fill="#b5b5b5"/></svg><span>Context Menu</span></span>
  <span class="st-stats">Scene Collection | Shape_IndexedFaceSet.001 | Verts:192 | Faces:144 | Tris:288 |</span>
</footer>
</body>
</html>
```

FILE: styles.css
```css
* { box-sizing: border-box; }
html, body { margin: 0; padding: 0; }
body {
  width: 2560px; height: 1440px; overflow: hidden;
  display: flex; flex-direction: column;
  background: #1f1f1f; color: #e0e0e0;
  font: 21px/1 "DejaVu Sans", sans-serif;
}
svg { display: block; flex: none; }
.sprite { position: absolute; width: 0; height: 0; }
.chev { width: 16px; height: 16px; color: #bdbdbd; }
.chev.dimc { color: #8a8a8a; }
.ic28 { width: 28px; height: 28px; color: #d8d8d8; }

/* Title bar */
.titlebar {
  height: 56px; flex: none; position: relative;
  display: flex; align-items: center; justify-content: center;
  background: linear-gradient(#3b3a36, #4c4b45);
}
.title { font: bold 26px/1 "DejaVu Sans", sans-serif; color: #dfdbd2; margin-top: -1px; }
.winbtns { position: absolute; right: 10px; top: 13px; display: flex; gap: 8px; }
.winbtn { width: 32px; height: 32px; border-radius: 50%; background: linear-gradient(#8a897f, #6e6d64); box-shadow: 0 1px 2px #222; }
.winbtn.close { background: linear-gradient(#f07a40, #d9481a); }

/* Top bar */
.topbar {
  height: 57px; flex: none; display: flex; align-items: flex-start;
  padding-left: 20px; background: linear-gradient(#242424 0, #232323 84%, #1e1e1e 84%);
}
.logo { width: 32px; height: 30px; margin-top: 12px; }
.menu { width: 471px; height: 52px; display: flex; align-items: center; padding-left: 18px; }
.menu-item { margin-right: 30.500px; color: #c6c6c6; }
.tabs { width: 1226px; height: 38px; margin-top: 12px; display: flex; gap: 6px; overflow: hidden; }
.tab {
  flex: none; height: 38px; padding: 0 17px; display: flex; align-items: center;
  background: #2b2b2b; color: #8f8f8f; border-radius: 8px 8px 0 0;
}
.tab.active { background: #404040; color: #e8e8e8; }
.idgroup { display: flex; height: 37px; margin-top: 7px; background: #2a2a2a; border-radius: 9px; overflow: hidden; box-shadow: 0 0 0 1px #333; }
.scene-group { margin-left: 18px; width: 380px; }
.layer-group { margin-left: 13px; width: 381px; }
.iddrop { width: 61px; display: flex; align-items: center; justify-content: center; gap: 1px; background: #2e2e2e; border-right: 2px solid #1b1b1b; }
.idinput { background: #171717; color: #e6e6e6; padding-left: 15px; display: flex; align-items: center; }
.scene-input { width: 239px; }
.layer-input { width: 240px; padding-left: 15px; }
.idbtn { width: 40px; display: flex; align-items: center; justify-content: center; background: #595959; border-left: 2px solid #2a2a2a; color: #d4d4d4; }
.idbtn.dim { background: #474747; color: #7d7d7d; }
.ic-copy { width: 28px; height: 30px; }
.ic-x { width: 18px; height: 18px; }

/* Workspace */
.workspace { height: 1289px; flex: none; display: flex; padding: 0 3px 6px 2px; gap: 7px; background: #1f1f1f; }
.leftcol { width: 1943px; flex: none; display: flex; flex-direction: column; gap: 7px; }
.rightcol { width: 605px; flex: none; display: flex; flex-direction: column; gap: 7px; }

/* Viewport */
.viewport { height: 1183px; flex: none; position: relative; overflow: hidden; background: #393939; border-radius: 10px; }
.scene { position: absolute; left: 0; top: 0; width: 1943px; height: 1183px; }
.grid path { fill: none; stroke: #4a4a4a; stroke-width: 2; }
.axis-y { fill: none; stroke: #5f7e28; stroke-width: 2.500; }
.axis-x { fill: none; stroke: #8c3a45; stroke-width: 2; }
.axis-x2 { fill: none; stroke: #b04c58; stroke-width: 2; }
.top { fill: #9fa2a3; }
.top-lite { fill: #a4a7a8; }
.dark { fill: #443f3c; }
.wall { fill: url(#wallr); }
.floor { fill: url(#floorg); }
.spike { fill: #787b7b; }
.sliver { fill: #5f6160; }
.band { fill: #505250; }
.band2 { fill: #5f6261; }
.floorgrid { fill: none; stroke: #000; stroke-opacity: .07; stroke-width: 2; }
.outline { fill: none; stroke: #f5a32c; stroke-width: 4; stroke-linejoin: round; }
.chair { fill: none; stroke: #000; stroke-width: 2.500; }
.ring-r { fill: none; stroke: #e01020; stroke-width: 2; }
.ring-w { fill: none; stroke: #fff; stroke-width: 2; stroke-dasharray: 10 20; }
.dot { fill: #f5a32c; stroke: #000; stroke-width: 2; }

.vhead {
  height: 50px; position: relative; display: flex; align-items: flex-start;
  padding: 7px 0 0 15px; background: #3d3d3d;
}
.vhead .dd, .vhead .seg { height: 36px; }
.vhead2 { height: 44px; position: relative; display: flex; align-items: flex-start; padding: 9px 0 0 17px; }
.vhead2 .dd, .vhead2 .seg { height: 35px; }
.dd {
  height: 37px; display: flex; align-items: center; justify-content: center; flex: none;
  background: #2b2b2b; border-radius: 9px; color: #d8d8d8; box-shadow: 0 1px 1px rgba(0,0,0,.2);
}
.dd-editor { width: 62px; gap: 2px; }
.activetool { width: 44px; height: 43px; margin: -5px 0 0 25px; flex: none; }
.activetool svg { width: 44px; height: 43px; }
.seg { display: flex; height: 37px; flex: none; border-radius: 9px; overflow: hidden; }
.segb { flex: 1; display: flex; align-items: center; justify-content: center; background: #595959; }
.segb + .segb { margin-left: 1px; }
.segb svg { width: 30px; height: 30px; }
.segb.on { background: #5680c2; }
.selmodes { width: 188px; margin-left: 31px; }
.dd-global { width: 156px; margin-left: 355px; gap: 12px; justify-content: flex-start; padding-left: 9px; }
.dd-global .dd-txt { color: #cfcfcf; }
.dd-global .chev { margin-left: 5px; }
.dd-pivot { width: 62px; margin-left: 13px; gap: 2px; }
.snap { width: 99px; margin-left: 14px; background: #2b2b2b; }
.prop { width: 100px; margin-left: 14px; background: #2b2b2b; }
.toggle { flex: none; width: 36px; }
.segdrop { flex: 1; display: flex; align-items: center; justify-content: center; gap: 1px; background: #2b2b2b; }
.dd-options { width: 127px; margin-left: 621px; gap: 8px; justify-content: flex-start; padding-left: 13px; }
.dd-mode { width: 216px; gap: 12px; justify-content: flex-start; padding-left: 8px; }
.dd-mode .chev { margin-left: 2px; }
.vmenu { height: 35px; background: #323232; border-radius: 8px; display: flex; align-items: center; justify-content: center; color: #d4d4d4; flex: none; }
.vm-view { width: 77px; margin-left: 14px; }
.vm-select { width: 90px; margin-left: 5px; }
.vm-add { width: 66px; margin-left: 5px; }
.vm-object { width: 94px; margin-left: 5px; }
.dd-vis { width: 61px; margin-left: 842px; gap: 1px; }
.gizmo { width: 75px; margin-left: 15px; }
.overlay { width: 75px; margin-left: 15px; }
.gizmo .segb, .overlay .segb { flex: none; width: 35px; }
.xray { width: 34px; margin-left: 15px; }
.shading { width: 189px; margin-left: 16px; }
.shading .segb { flex: none; width: 37px; margin-left: 1px; }
.shading .segb:first-child { margin-left: 0; }
.shading .segb svg { width: 27px; height: 27px; }
.segb.plain { background: #595959; }

.vinfo { position: absolute; left: 155px; top: 125px; text-shadow: 1px 1px 2px #000; color: #ececec; }
.vinfo p { margin: 0 0 18px; height: 21px; line-height: 21px; }

.tools { position: absolute; left: 16px; top: 120px; width: 80px; display: flex; flex-direction: column; }
.toolgroup { display: flex; flex-direction: column; background: #2c2c2c; border-radius: 10px; overflow: hidden; }
.g1 { height: 135px; }
.g2 { height: 276px; margin-top: 14px; }
.g3 { height: 136px; margin-top: 15px; }
.tool { flex: 1; position: relative; display: flex; align-items: center; justify-content: center; padding-right: 2px; }
.tool svg { width: 48px; height: 48px; }
.tool.on { background: #5680c2; }
.corner { position: absolute; right: 4px; bottom: 4px; width: 9px; height: 9px; background: #7a7a7a; clip-path: polygon(100% 0, 100% 100%, 0 100%); }
.tool.on .corner { background: #a8bfe6; }

.gizmo3d { position: absolute; left: 1787px; top: 119px; width: 130px; height: 130px; overflow: visible; }
.gz { font: 20px "DejaVu Sans", sans-serif; fill: #0a0a0a; text-anchor: middle; }
.navbtns { position: absolute; left: 1870px; top: 283px; display: flex; flex-direction: column; gap: 5px; }
.navbtn { width: 56px; height: 56px; border-radius: 50%; background: #2e2e2e; display: flex; align-items: center; justify-content: center; }
.navbtn svg { width: 36px; height: 36px; }
.sidearrow { position: absolute; right: 0; top: 131px; width: 15px; height: 28px; background: #333; border-radius: 6px 0 0 6px; display: flex; align-items: center; justify-content: center; }
.sidearrow svg { width: 10px; height: 18px; }

/* Timeline */
.timeline { height: 93px; flex: none; border-radius: 10px; overflow: hidden; background: #333; display: flex; flex-direction: column; }
.thead { height: 50px; flex: none; background: #3d3d3d; display: flex; align-items: flex-start; padding: 7px 0 0 16px; }
.dd-time { width: 60px; gap: 1px; }
.ddgroup { display: flex; height: 37px; margin-left: 13px; background: #2b2b2b; border-radius: 9px; flex: none; }
.ddpart { display: flex; align-items: center; justify-content: space-between; padding: 0 6px 0 14px; color: #d4d4d4; }
.dp-play { width: 143px; border-right: 1px solid #3d3d3d; }
.dp-key { width: 121px; }
.tmenu { height: 37px; display: flex; align-items: center; color: #d4d4d4; flex: none; }
.tm-view { width: 82px; margin-left: 16px; }
.tm-marker { width: 100px; }
.btn { height: 37px; flex: none; display: flex; align-items: center; justify-content: center; background: #595959; border-radius: 9px; color: #e0e0e0; }
.record { width: 34px; margin-left: 255px; }
.record svg { width: 18px; height: 18px; }
.transport { width: 236px; margin-left: 14px; }
.tbtn { flex: 1; display: flex; align-items: center; justify-content: center; background: #595959; }
.tbtn + .tbtn { margin-left: 1px; }
.tbtn svg { width: 26px; height: 26px; }
.tbtn svg.wide { width: 34px; height: 29px; }
.frame { width: 146px; margin-left: 267px; }
.range { width: 386px; margin-left: 14px; }
.rng-icon { width: 36px; background: #4d4d4d; display: flex; align-items: center; justify-content: center; border-right: 1px solid #3a3a3a; }
.rng-icon svg { width: 28px; height: 32px; }
.rng { background: #595959; display: flex; align-items: center; justify-content: space-between; color: #e0e0e0; }
.rng-start { width: 180px; padding: 0 24px 0 32px; border-right: 1px solid #3a3a3a; }
.rng-end { width: 170px; padding: 0 24px 0 31px; }
.scrub { flex: 1; position: relative; overflow: hidden; background: #353535; }
.ticks { display: flex; padding: 11px 0 0 134px; }
.ticks span { width: 145px; flex: none; text-align: center; color: #aaa; line-height: 21px; }
.frametag { position: absolute; left: 46px; top: 4px; width: 51px; height: 38px; background: #5680c2; border-radius: 8px 8px 0 0; text-align: center; font-size: 20px; line-height: 40px; font-weight: bold; color: #eee; }
.scrollbar { position: absolute; left: 15px; right: 15px; top: 21px; height: 18px; border-radius: 9px; background: #6c6c6c; box-shadow: 0 0 0 2px rgba(40,40,40,.5); display: flex; align-items: center; justify-content: space-between; padding: 0 2px; }
.scrollbar i { width: 14px; height: 14px; border-radius: 50%; background: #505050; }

/* Outliner */
.outliner { height: 408px; flex: none; position: relative; overflow: hidden; border-radius: 10px 10px 0 0; background: #2e2e2e; }
.ohead { height: 50px; background: #3d3d3d; display: flex; align-items: flex-start; padding: 6px 0 0 17px; }
.dd-o1 { width: 60px; gap: 0; }
.dd-o2 { width: 60px; margin-left: 14px; gap: 1px; }
.search { width: 229px; height: 36px; margin-left: 36px; background: #171717; border-radius: 9px; padding: 2px 0 0 8px; flex: none; }
.search svg { width: 28px; height: 32px; }
.dd-o3 { width: 60px; margin-left: 64px; gap: 1px; }
.onew { width: 35px; height: 37px; margin-left: 14px; background: #595959; border-radius: 9px; display: flex; align-items: center; justify-content: center; flex: none; }
.onew svg { width: 29px; height: 32px; }
.orow { height: 40px; display: flex; align-items: center; background: #2a2a2a; }
.orow.alt { background: #2e2e2e; }
.orow.sel { background: #203a5c; }
.orow.active { background: #3b5688; }
.obox { width: 40px; height: 36px; flex: none; margin-right: 8px; border-radius: 8px; background: rgba(255,255,255,.13); border: 1px solid rgba(255,255,255,.15); display: flex; align-items: center; justify-content: center; }
.obox svg { width: 28px; height: 32px; }
.plainbox { background: none; border: none; }
.r1 { padding-left: 39px; height: 41px; }
.r2, .r3 { padding-left: 78px; }
.olabel { color: #b8c0cc; padding-top: 4px; }
.r1 .olabel { padding-top: 6px; }
.objname { color: #f5a32c; width: 324px; flex: none; }
.objname2 { color: #e36c10; width: 149px; flex: none; }
.ic-wrench { width: 28px; height: 34px; margin-left: 11px; }
.ic-cage { width: 28px; height: 36px; margin-left: 14px; color: #12b5a0; }
.ic-eye { width: 26px; height: 22px; color: #e4e8ee; }
.r2 .ic-eye { margin-left: 28px; }
.r3 .ic-eye { margin-left: 253px; }
.ic-cam { color: #dc9a62; width: 32px !important; height: 36px !important; }
.ic-movie { width: 32px; height: 36px; color: #12b5a0; }
.otree { position: absolute; left: 48px; top: 88px; width: 40px; height: 80px; }

/* Properties */
.props { height: 868px; flex: none; position: relative; background: #414141; border-radius: 10px; padding: 0 15px 0 16px; }
.phead { height: 68px; display: flex; align-items: flex-start; padding-top: 6px; }
.dd-p { width: 61px; gap: 1px; }
.pobj { margin: 4px 0 0 30px; }
.pname { margin: 5px 0 0 18px; color: #e4e4e4; line-height: 28px; }
.pin { width: 28px; height: 32px; margin: 2px 0 0 auto; margin-right: 3px; }
.addmod { height: 36px; background: #2b2b2b; border-radius: 8px; display: flex; align-items: center; justify-content: space-between; padding: 0 3px 0 14px; color: #d8d8d8; }
.modpanel { margin-top: 14px; height: 511px; background: #383838; border-radius: 8px; }
.modhead { height: 57px; display: flex; align-items: center; position: relative; border-bottom: 1px solid #303030; background: #363636; border-radius: 8px 8px 0 0; padding-left: 18px; }
.ic-tri { width: 14px; height: 14px; color: #e4e4e4; }
.ic-tri.up { transform: rotate(180deg); }
.ic-cube { width: 28px; height: 32px; margin-left: 35px; }
.modname { width: 71px; height: 36px; margin-left: 22px; background: #1b1b1b; border-radius: 8px; display: flex; align-items: center; padding-left: 14px; color: #e6e6e6; flex: none; }
.modes { width: 195px; margin-left: 20px; }
.modes .segb { flex: none; }
.m1 { width: 42px; }
.m2 { width: 51px; }
.m3 { width: 52px; }
.m4 { width: 47px; }
.modes svg { width: 28px; height: 28px; }
.ic-cage2 { color: #d0d0d0; width: 26px !important; height: 30px !important; }
.updown { width: 86px; margin-left: 21px; }
.updown svg { width: 16px; height: 16px; }
.ic-close { width: 20px; height: 20px; margin-left: 26px; color: #e4e4e4; }
.modbody { display: flex; gap: 20.500px; padding: 13px 10px 0; }
.modcol { width: 266.500px; flex: none; display: flex; flex-direction: column; }
.field {
  height: 36px; flex: none; margin-bottom: 8px; display: flex; align-items: center; justify-content: space-between;
  padding: 0 13px 0 20px; background: #585858; border-radius: 8px; color: #e2e2e2; position: relative; overflow: hidden;
}
.field.center { justify-content: center; padding: 0; color: #d8d8d8; }
.gap-b20 { margin-bottom: 20px; }
.thick { padding: 0 25px 0 31px; }
.vgroup { display: flex; height: 36px; margin: 16px 0 8px; border-radius: 8px; overflow: hidden; flex: none; }
.vginput { width: 227px; background: #1b1b1b; padding: 2px 0 0 8px; }
.vginput svg { width: 28px; height: 32px; }
.vgbtn { flex: 1; background: #4f4f4f; display: flex; align-items: center; justify-content: center; }
.vgbtn svg { width: 30px; height: 20px; }
.field.disabled { background: #4b4b4b; color: #828282; }
.plainlabel { color: #e0e0e0; height: 24px; line-height: 24px; flex: none; }
.crease { margin: 6px 0 14px 14px; }
.offset { padding: 0 15px 0 21px; }
.off-fill { position: absolute; left: 0; top: 0; bottom: 0; width: 131px; background: #5680c2; }
.off-l, .off-v { position: relative; }
.check { height: 24px; margin-bottom: 20px; flex: none; display: flex; align-items: center; color: #e0e0e0; padding-left: 5px; }
.check i { width: 24px; height: 24px; margin-right: 18.500px; background: #646464; border-radius: 5px; flex: none; }
.check.first { margin-top: 6px; }
.checked i { background: #5680c2; }
.matlabel { margin: 15px 0 14px 15px; }
.matrow { display: flex; height: 36px; background: #585858; border-radius: 8px; overflow: hidden; flex: none; }
.mat1 { width: 107px; display: flex; align-items: center; justify-content: center; border-right: 1px solid #3a3a3a; flex: none; }
.mat2 { flex: 1; display: flex; align-items: center; justify-content: space-between; padding: 0 28px 0 32px; }
.propsarrow { position: absolute; left: 0; top: 79px; width: 14px; height: 27px; background: #353535; border-radius: 0 6px 6px 0; display: flex; align-items: center; justify-content: center; }
.propsarrow svg { width: 10px; height: 18px; }

/* Status bar */
.status { height: 38px; flex: none; display: flex; align-items: center; padding: 0 5px 0 24px; background: #2f2f2f; color: #a8a8a8; }
.st-item { width: 539px; flex: none; display: flex; align-items: center; gap: 23px; }
.ic-mouse { width: 22px; height: 32px; color: #b5b5b5; }
.st-stats { margin-left: auto; white-space: nowrap; letter-spacing: .18px; }
```
